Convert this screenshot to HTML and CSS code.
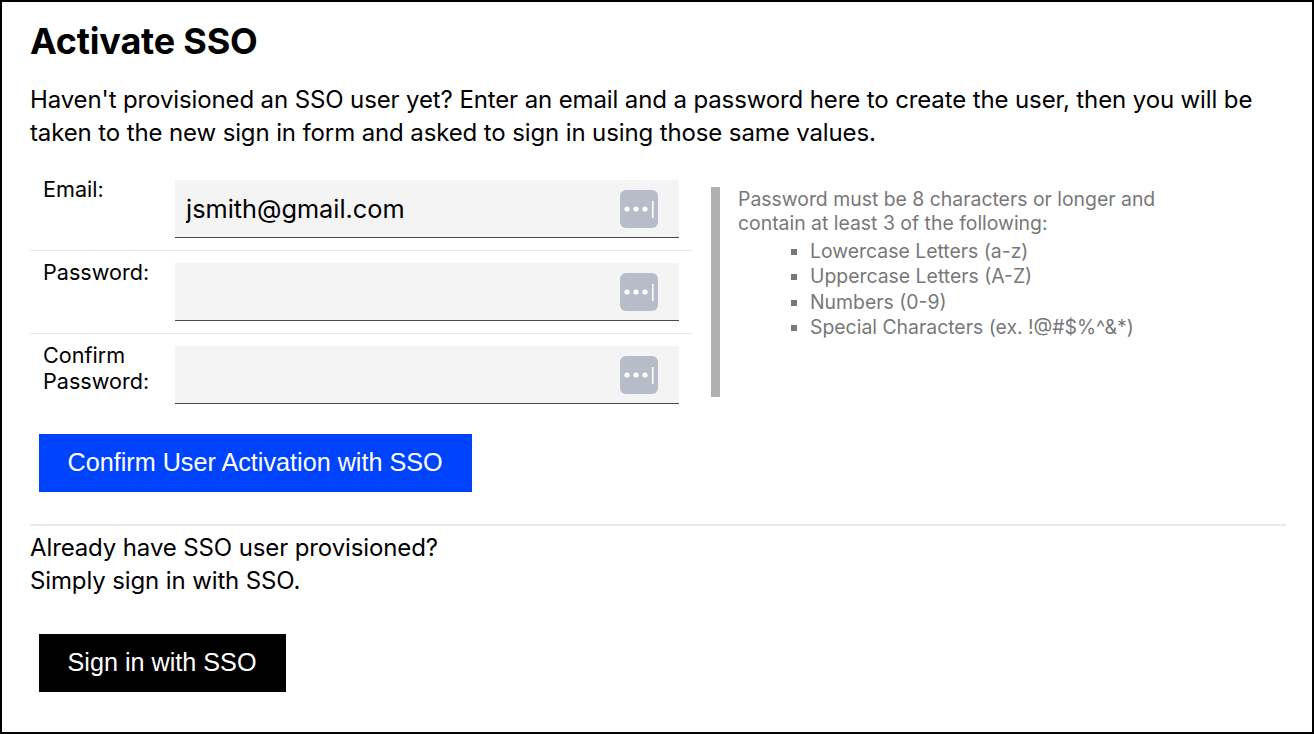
FILE: index.html
```html
<!DOCTYPE html>
<html lang="en">
<head>
    <meta charset="UTF-8">
    <title>Activate SSO</title>
    <link rel="stylesheet" href="styles.css">
</head>
<body>

<div class="container">
    <h1>Activate SSO</h1>
    <p class="intro">Haven't provisioned an SSO user yet? Enter an email and a password here to create the user, then you will be taken to the new sign in form and asked to sign in using those same values.</p>

    <div class="form-area">
        <div class="fields">
            <div class="row">
                <label for="email">Email:</label>
                <div class="input-box">
                    <input type="text" id="email" value="jsmith@gmail.com">
                    <svg class="key-icon" viewBox="0 0 38 38"><rect width="38" height="38" rx="6" fill="#b6bcc8"/><circle cx="7" cy="19" r="2.6" fill="#fff"/><circle cx="16" cy="19" r="2.6" fill="#fff"/><circle cx="25" cy="19" r="2.6" fill="#fff"/><rect x="32" y="11" width="1.6" height="17" fill="#fff"/></svg>
                </div>
            </div>
            <div class="row">
                <label for="password">Password:</label>
                <div class="input-box">
                    <input type="password" id="password">
                    <svg class="key-icon" viewBox="0 0 38 38"><rect width="38" height="38" rx="6" fill="#b6bcc8"/><circle cx="7" cy="19" r="2.6" fill="#fff"/><circle cx="16" cy="19" r="2.6" fill="#fff"/><circle cx="25" cy="19" r="2.6" fill="#fff"/><rect x="32" y="11" width="1.6" height="17" fill="#fff"/></svg>
                </div>
            </div>
            <div class="row last">
                <label for="confirm">Confirm Password:</label>
                <div class="input-box">
                    <input type="password" id="confirm">
                    <svg class="key-icon" viewBox="0 0 38 38"><rect width="38" height="38" rx="6" fill="#b6bcc8"/><circle cx="7" cy="19" r="2.6" fill="#fff"/><circle cx="16" cy="19" r="2.6" fill="#fff"/><circle cx="25" cy="19" r="2.6" fill="#fff"/><rect x="32" y="11" width="1.6" height="17" fill="#fff"/></svg>
                </div>
            </div>
        </div>

        <div class="hint">
            <p>Password must be 8 characters or longer and contain at least 3 of the following:</p>
            <ul>
                <li>Lowercase Letters (a-z)</li>
                <li>Uppercase Letters (A-Z)</li>
                <li>Numbers (0-9)</li>
                <li>Special Characters (ex. !@#$%^&amp;*)</li>
            </ul>
        </div>
    </div>

    <button class="btn btn-blue">Confirm User Activation with SSO</button>

    <hr class="divider">

    <p class="already">Already have SSO user provisioned?<br>Simply sign in with SSO.</p>

    <button class="btn btn-black">Sign in with SSO</button>
</div>

</body>
</html>
```

FILE: styles.css
```css
html, body {
    margin: 0;
    height: 100%;
}
body {
    font-family: "Inter", "Liberation Sans", sans-serif;
    color: #000;
    background-color: #fff;
}
.container {
    box-sizing: border-box;
    height: 734px;
    border: 2px solid #000;
    padding: 18px 26px 0 28px;
}
h1 {
    margin: 0;
    font-size: 36px;
    line-height: 42px;
    font-weight: 700;
    letter-spacing: -0.2px;
}
.intro {
    margin: 21px 0 0;
    font-size: 24px;
    line-height: 33px;
    letter-spacing: -0.12px;
}
.form-area {
    display: flex;
    margin-top: 31px;
}
.fields {
    width: 662px;
}
.row {
    display: flex;
    height: 70px;
    margin-bottom: 12px;
    border-bottom: 1px solid #e8e8e8;
}
.row.last {
    margin-bottom: 0;
    border-bottom: none;
}
.row label {
    box-sizing: border-box;
    width: 145px;
    padding-left: 13px;
    font-size: 21.6px;
    line-height: 26px;
    flex-shrink: 0;
    margin-top: -4px;
}
.input-box {
    position: relative;
    box-sizing: border-box;
    width: 504px;
    height: 58px;
    background-color: #f4f4f4;
    border-bottom: 1px solid #4a4a4a;
}
.input-box input {
    box-sizing: border-box;
    width: 100%;
    height: 57px;
    padding: 0 60px 0 11px;
    border: none;
    outline: none;
    background: transparent;
    font-family: inherit;
    font-size: 25.3px;
    color: #000;
}
.key-icon {
    position: absolute;
    top: 10px;
    right: 21px;
    width: 38px;
    height: 38px;
}
.hint {
    box-sizing: border-box;
    width: 470px;
    height: 210px;
    margin: 7px 0 0 19px;
    padding-left: 18px;
    border-left: 9px solid #b0b0b0;
    font-size: 19.4px;
    line-height: 24px;
    color: #787878;
}
.hint p {
    margin: 0;
}
.hint ul {
    margin: 4px 0 0;
    padding-left: 72px;
    list-style-type: square;
}
.hint li {
    line-height: 25.3px;
}
.btn {
    display: block;
    height: 58px;
    padding: 0 29px 2px 28.5px;
    border: none;
    color: #fff;
    font-family: "Liberation Sans", Arial, sans-serif;
    font-size: 25.2px;
    margin-left: 9px;
}
.btn-blue {
    margin-top: 18px;
    background-color: #0043ff;
}
.btn-black {
    margin-top: 37px;
    background-color: #000;
}
.divider {
    margin: 32px 0 0;
    border: none;
    border-top: 2px solid #e8e8e8;
}
.already {
    margin: 5px 0 0;
    font-size: 24px;
    line-height: 33px;
    letter-spacing: -0.12px;
}
```
